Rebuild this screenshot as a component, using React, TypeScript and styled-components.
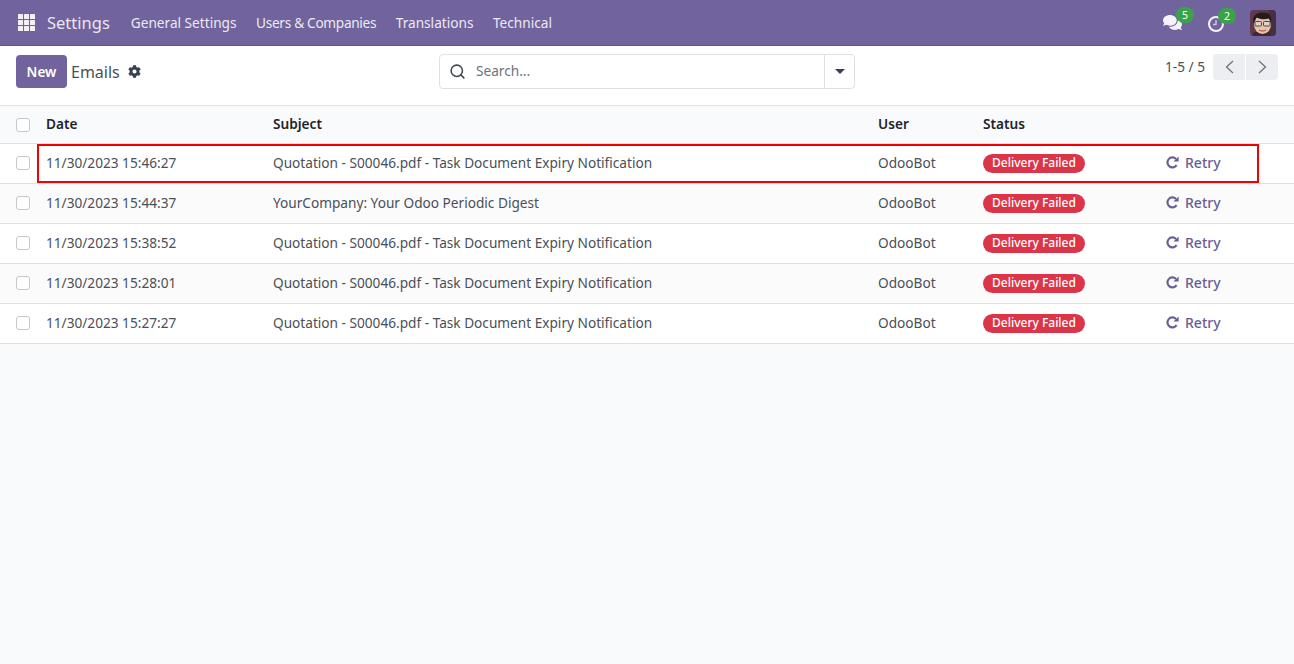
import styled, { createGlobalStyle } from 'styled-components';
import { FaCog, FaComments } from 'react-icons/fa';
import { Search } from 'lucide-react';

const GlobalStyle = createGlobalStyle`
  html, body {
    margin: 0;
    padding: 0;
    height: 100%;
    background: #f9fafb;
  }
  body {
    font-family: 'Noto Sans', 'Open Sans', sans-serif;
    font-size: 13.65px;
    color: #4a4f59;
  }
  #root {
    min-height: 100%;
  }
`;

const Page = styled.div`
  min-height: 664px;
  background: #f9fafb;
`;

const NavBar = styled.header`
  height: 46px;
  box-sizing: border-box;
  display: flex;
  align-items: center;
  background: #71639e;
  border-bottom: 1px solid #5f5387;
  color: #fff;
  padding: 0 18px;
`;

const AppsGrid = styled.div`
  width: 17px;
  height: 17px;
  display: grid;
  grid-template-columns: repeat(3, 5px);
  grid-auto-rows: 5px;
  gap: 1px;
  margin-right: 12px;
`;

const AppsCell = styled.span`
  background: #f3f1f7;
  border-radius: 0.5px;
`;

const BrandName = styled.span`
  font-size: 16.5px;
  color: #e9e6f0;
  margin-right: 21px;
`;

const NavLink = styled.span<{ $squeeze?: boolean }>`
  font-size: 13.65px;
  color: #ece9f2;
  margin-right: 19.5px;
  letter-spacing: ${(p) => (p.$squeeze ? '-0.3px' : '0')};
`;

const NavRight = styled.div`
  margin-left: auto;
  display: flex;
  align-items: center;
`;

const IconWithCount = styled.div<{ $gap: number }>`
  position: relative;
  display: flex;
  align-items: center;
  color: #f5f3f9;
  margin-right: ${(p) => p.$gap}px;
`;

const CountBadge = styled.span<{ $left: number }>`
  position: absolute;
  top: -6px;
  left: ${(p) => p.$left}px;
  width: 18px;
  height: 16px;
  border-radius: 8px;
  background: #3aa348;
  color: #fff;
  font-size: 10.5px;
  line-height: 16px;
  text-align: center;
`;

const ClockIcon = styled.svg`
  width: 16px;
  height: 16px;
  display: block;
  margin-top: 2px;
`;

const Avatar = styled.svg`
  width: 26px;
  height: 26px;
  display: block;
  border-radius: 4px;
`;

const ControlPanel = styled.section`
  height: 60px;
  box-sizing: border-box;
  background: #fff;
  border-bottom: 1px solid #dee2e6;
  display: grid;
  grid-template-columns: 423px 416px 1fr;
  padding: 9px 16px 0 16px;
`;

const TitleArea = styled.div`
  display: flex;
  align-items: flex-start;
`;

const NewButton = styled.button`
  width: 51px;
  height: 33px;
  border: none;
  border-radius: 4px;
  background: #71639e;
  color: #fff;
  font-family: inherit;
  font-size: 13.65px;
  font-weight: 600;
  padding: 0;
`;

const PageTitle = styled.span`
  font-size: 16px;
  line-height: 34px;
  color: #4a4f59;
  margin-left: 4px;
`;

const CogIcon = styled(FaCog)`
  width: 13px;
  height: 13px;
  margin: 10px 0 0 8px;
  color: #374151;
`;

const SearchBox = styled.div`
  width: 416px;
  height: 35px;
  margin-top: -1px;
  box-sizing: border-box;
  background: #fff;
  border: 1px solid #dee2e6;
  border-radius: 4px;
  display: flex;
  align-items: center;
`;

const SearchIcon = styled(Search)`
  width: 17px;
  height: 17px;
  margin: 0 10px 0 9px;
  color: #3f4650;
`;

const SearchPlaceholder = styled.span`
  flex: 1;
  font-size: 13.65px;
  color: #6b7280;
  padding-bottom: 2px;
`;

const SearchToggle = styled.div`
  width: 29px;
  height: 100%;
  border-left: 1px solid #dee2e6;
  display: flex;
  align-items: center;
  justify-content: center;
`;

const Caret = styled.span`
  width: 0;
  height: 0;
  border-left: 5px solid transparent;
  border-right: 5px solid transparent;
  border-top: 5px solid #374151;
`;

const Pager = styled.div`
  display: flex;
  justify-content: flex-end;
  align-items: center;
  height: 26px;
  margin-top: -1px;
`;

const PagerText = styled.span`
  font-size: 13.65px;
  color: #4a4f59;
  margin-right: 8px;
  padding-bottom: 2px;
`;

const PagerButton = styled.button<{ $side: 'left' | 'right' }>`
  width: 32px;
  height: 26px;
  border: none;
  padding: 0;
  background: #eceef1;
  color: #6b7280;
  display: flex;
  align-items: center;
  justify-content: center;
  margin-left: ${(p) => (p.$side === 'right' ? '1px' : '0')};
  border-radius: ${(p) => (p.$side === 'left' ? '4px 0 0 4px' : '0 4px 4px 0')};
`;

const PagerChevron = styled.svg`
  width: 9px;
  height: 14px;
  display: block;
`;

const COLUMNS = '46px 227px 605px 105px 183px 1fr';

const HeaderRow = styled.div`
  display: grid;
  grid-template-columns: ${COLUMNS};
  align-items: center;
  height: 38px;
  box-sizing: border-box;
  background: #f9fafb;
  border-bottom: 1px solid #dee2e6;
`;

const HeaderCell = styled.span`
  font-weight: 600;
  font-size: 13.65px;
  color: #212529;
  padding-bottom: 3px;
`;

const Row = styled.div<{ $striped: boolean }>`
  position: relative;
  display: grid;
  grid-template-columns: ${COLUMNS};
  align-items: center;
  height: 40px;
  box-sizing: border-box;
  padding-bottom: 2px;
  background: ${(p) => (p.$striped ? '#fbfbfb' : '#fff')};
  border-bottom: 1px solid #dee2e6;
`;

const Highlight = styled.div`
  position: absolute;
  left: 37px;
  top: 0;
  width: 1222px;
  height: 39px;
  box-sizing: border-box;
  border: 2px solid #f00000;
  pointer-events: none;
`;

const CheckCell = styled.div`
  padding-left: 16px;
  display: flex;
  align-items: center;
`;

const CheckBox = styled.span`
  width: 12px;
  height: 12px;
  border: 1px solid #c4c8cd;
  border-radius: 3px;
  background: #fff;
`;

const Cell = styled.span`
  font-size: 13.65px;
  color: #4a4f59;
  white-space: nowrap;
`;

const StatusCell = styled.div`
  display: flex;
  align-items: center;
  padding-top: 2px;
`;

const StatusPill = styled.span`
  width: 102px;
  height: 19px;
  line-height: 18px;
  text-align: center;
  border-radius: 10px;
  background: #dc3548;
  color: #fff;
  font-size: 12px;
  font-weight: 500;
`;

const RetryLink = styled.span`
  display: inline-flex;
  align-items: center;
  color: #6a5c96;
  font-size: 14px;
  font-weight: 500;
`;

const RetryIcon = styled.svg`
  width: 13px;
  height: 13px;
  margin-right: 6px;
  display: block;
`;

const rows = [
  { date: '11/30/2023 15:46:27', subject: 'Quotation - S00046.pdf - Task Document Expiry Notification' },
  { date: '11/30/2023 15:44:37', subject: 'YourCompany: Your Odoo Periodic Digest' },
  { date: '11/30/2023 15:38:52', subject: 'Quotation - S00046.pdf - Task Document Expiry Notification' },
  { date: '11/30/2023 15:28:01', subject: 'Quotation - S00046.pdf - Task Document Expiry Notification' },
  { date: '11/30/2023 15:27:27', subject: 'Quotation - S00046.pdf - Task Document Expiry Notification' },
];

const navLinks = ['General Settings', 'Users & Companies', 'Translations', 'Technical'];

export default function App() {
  return (
    <Page>
      <GlobalStyle />
      <NavBar>
        <AppsGrid>
          {Array.from({ length: 9 }).map((_, i) => (
            <AppsCell key={i} />
          ))}
        </AppsGrid>
        <BrandName>Settings</BrandName>
        {navLinks.map((l) => (
          <NavLink key={l} $squeeze={l.includes('&')}>
            {l}
          </NavLink>
        ))}
        <NavRight>
          <IconWithCount $gap={26}>
            <FaComments size={19} />
            <CountBadge $left={13}>5</CountBadge>
          </IconWithCount>
          <IconWithCount $gap={26}>
            <ClockIcon viewBox="0 0 16 16" fill="none" stroke="#f5f3f9" strokeWidth="2">
              <circle cx="8" cy="8" r="7" />
              <path d="M8 4v4.5H5" strokeWidth="1.4" stroke="#cfc9e0" />
            </ClockIcon>
            <CountBadge $left={10}>2</CountBadge>
          </IconWithCount>
          <Avatar viewBox="0 0 26 26">
            <rect width="26" height="26" fill="#5d3a4e" />
            <rect x="18" width="8" height="26" fill="#4a2f42" />
            <path d="M3 26v-3l5-2h8l5 2v3z" fill="#3a2a36" />
            <ellipse cx="12.5" cy="14.5" rx="8.5" ry="9.5" fill="#eec2a8" />
            <path d="M3.5 14C1.5 6 6 2.5 13 2.5c6 0 9.5 3 8 11l-2-5c-4 1.2-9 1-12.5-1z" fill="#221e20" />
            <rect x="5" y="11.5" width="6.5" height="4.5" rx="1" fill="#d9d6d2" stroke="#4a4a4a" strokeWidth="1" />
            <rect x="13.5" y="11.5" width="6.5" height="4.5" rx="1" fill="#d9d6d2" stroke="#4a4a4a" strokeWidth="1" />
            <path d="M9 20c2.4 1.4 5 1.4 7 0" stroke="#8c4a44" strokeWidth="1" fill="none" />
          </Avatar>
        </NavRight>
      </NavBar>

      <ControlPanel>
        <TitleArea>
          <NewButton>New</NewButton>
          <PageTitle>Emails</PageTitle>
          <CogIcon />
        </TitleArea>
        <SearchBox>
          <SearchIcon strokeWidth={2.2} />
          <SearchPlaceholder>Search...</SearchPlaceholder>
          <SearchToggle>
            <Caret />
          </SearchToggle>
        </SearchBox>
        <Pager>
          <PagerText>1-5 / 5</PagerText>
          <PagerButton $side="left">
            <PagerChevron viewBox="0 0 9 14" fill="none" stroke="currentColor" strokeWidth="1.3">
              <path d="M8 1L1.5 7L8 13" />
            </PagerChevron>
          </PagerButton>
          <PagerButton $side="right">
            <PagerChevron viewBox="0 0 9 14" fill="none" stroke="currentColor" strokeWidth="1.3">
              <path d="M1 1L7.5 7L1 13" />
            </PagerChevron>
          </PagerButton>
        </Pager>
      </ControlPanel>

      <HeaderRow>
        <CheckCell>
          <CheckBox />
        </CheckCell>
        <HeaderCell>Date</HeaderCell>
        <HeaderCell>Subject</HeaderCell>
        <HeaderCell>User</HeaderCell>
        <HeaderCell>Status</HeaderCell>
        <span />
      </HeaderRow>

      {rows.map((r, i) => (
        <Row key={r.date} $striped={i % 2 === 1}>
          <CheckCell>
            <CheckBox />
          </CheckCell>
          <Cell>{r.date}</Cell>
          <Cell>{r.subject}</Cell>
          <Cell>OdooBot</Cell>
          <StatusCell>
            <StatusPill>Delivery Failed</StatusPill>
          </StatusCell>
          <RetryLink>
            <RetryIcon viewBox="0 0 13 13" fill="none">
              <path d="M10.6 9.2A5 5 0 1 1 10 2.9" stroke="currentColor" strokeWidth="2.1" />
              <path d="M12.6 0.4V5.6H7.4z" fill="currentColor" />
            </RetryIcon>
            Retry
          </RetryLink>
          {i === 0 && <Highlight />}
        </Row>
      ))}
    </Page>
  );
}
